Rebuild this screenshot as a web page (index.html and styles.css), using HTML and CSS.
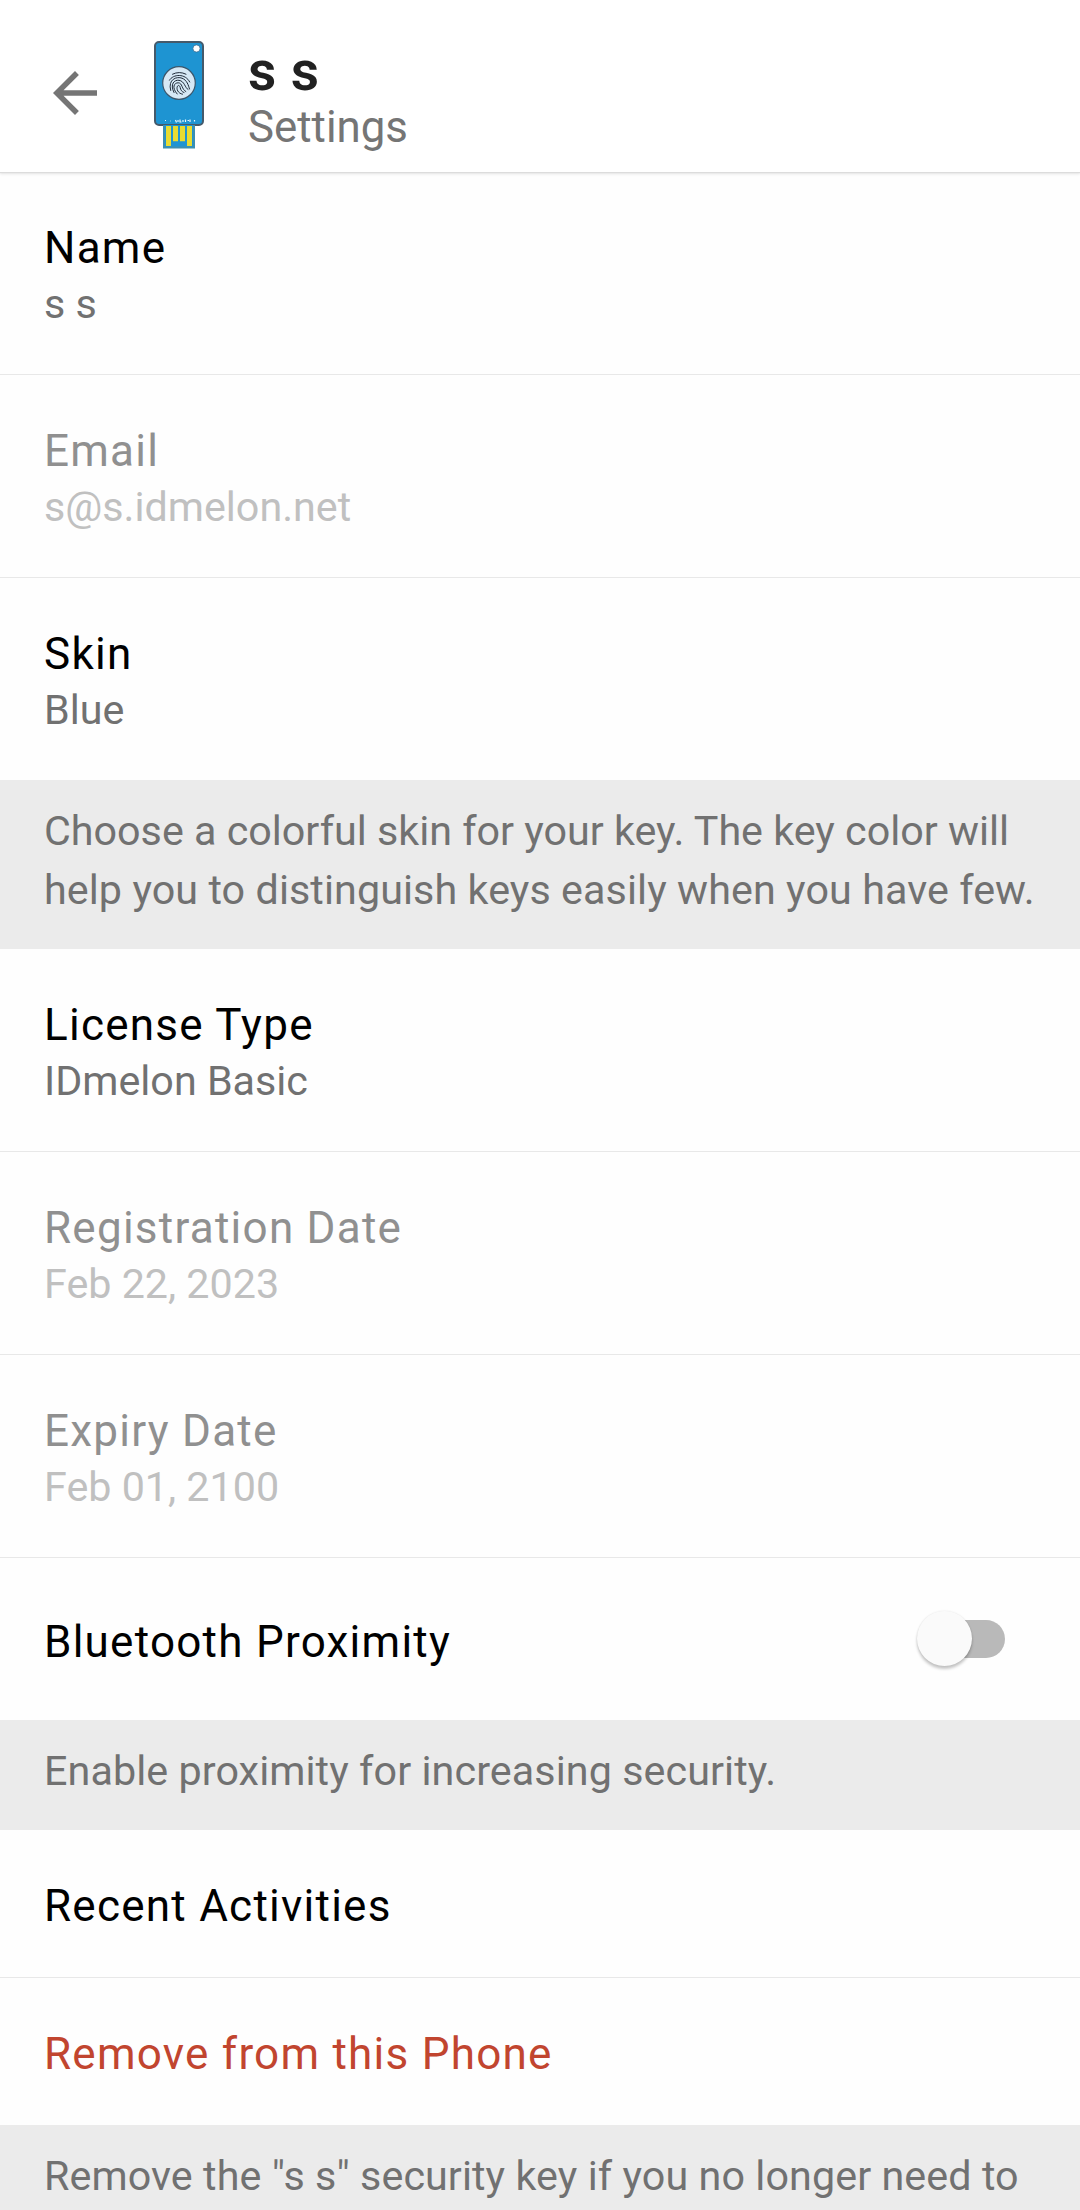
FILE: index.html
```html
<!DOCTYPE html>
<html lang="en">
<head>
<meta charset="utf-8">
<title>Settings</title>
<link rel="stylesheet" href="styles.css">
</head>
<body>
<div class="screen">
  <header class="toolbar">
    <svg class="back" viewBox="0 0 24 24" aria-label="Back"><path d="M20 11H7.83l5.59-5.59L12 4l-8 8 8 8 1.41-1.41L7.83 13H20z"/></svg>
    <svg class="key" viewBox="0 0 50 108" aria-hidden="true">
      <rect class="key-body" x="1" y="1" width="48" height="83" rx="4"/>
      <path class="key-plug" d="M10 84V106.500H40V84"/>
      <path class="key-pins" d="M12 85h5v20h-5zM19 85h5v15.300h-5zM26 85h5v15.300h-5zM33 85h5v20h-5z"/>
      <circle class="key-hole" cx="42.5" cy="7.5" r="3.6"/>
      <circle class="key-sensor" cx="25" cy="42" r="16.3"/>
      <g class="key-print">
        <path d="M18.500 33.200Q25.300 29.800 32 33.200"/>
        <path d="M15.500 39.200C19 32.800 31.500 32.200 35.700 41"/>
        <path d="M16.700 49.500C13.500 38 23 35.200 28 37.200C33 39 34.500 44.500 35.500 48"/>
        <path d="M20 51.500C15.500 43 20.500 38.600 25 39.300C30.500 40 31 47 34 48.500"/>
        <path d="M23.200 53C17.500 46.500 20 41.800 24.200 41.800C28.500 41.800 27.500 48.500 31.800 50.500"/>
        <path d="M28.500 53.200C24 52.500 22 48 23.500 45.200C24.500 43.500 26 45 26.200 46.500C26.500 49 28 51 30 51.500"/>
      </g>
      <path class="key-mark" d="M11 79.500h1M16 80h.6M21.500 79l1 2.500M24 79v2M26 78.500v2.500h1.500M29 79v2M31.500 78.500v2.500M33.500 79.500h1.500M36 78.500v2.500M40.500 79v1.500"/>
    </svg>
    <div class="heading">
      <h1 class="heading-title">s s</h1>
      <p class="heading-sub">Settings</p>
    </div>
  </header>
  <main>
    <section class="item divided"><h2 class="label">Name</h2><p class="value">s s</p></section>
    <section class="item divided disabled"><h2 class="label">Email</h2><p class="value">s@s.idmelon.net</p></section>
    <section class="item"><h2 class="label">Skin</h2><p class="value">Blue</p></section>
    <p class="note">Choose a colorful skin for your key. The key color will <span class="loose">help you to distinguish keys easily when you have few.</span></p>
    <section class="item divided"><h2 class="label">License Type</h2><p class="value">IDmelon Basic</p></section>
    <section class="item divided disabled"><h2 class="label">Registration Date</h2><p class="value">Feb 22, 2023</p></section>
    <section class="item divided disabled"><h2 class="label">Expiry Date</h2><p class="value">Feb 01, 2100</p></section>
    <section class="item item-switch"><h2 class="label">Bluetooth Proximity</h2><span class="switch" role="switch" aria-checked="false"><span class="thumb"></span></span></section>
    <p class="note"><span class="loose">Enable proximity for increasing security.</span></p>
    <section class="item divided"><h2 class="label">Recent Activities</h2></section>
    <section class="item"><h2 class="label danger">Remove from this Phone</h2></section>
    <p class="note"><span class="loose">Remove the "s s" security key if you no longer need to</span></p>
  </main>
</div>
</body>
</html>
```
FILE: styles.css
```css
* { box-sizing: border-box; }
body { margin: 0; background: #fff; font-family: Roboto, "Noto Sans", sans-serif; }
h1, h2, p { margin: 0; font-weight: 400; }

.screen { width: 1080px; height: 2210px; overflow: hidden; background: #fefefe; }

.toolbar {
  display: flex;
  align-items: flex-start;
  height: 172px;
  padding-left: 42px;
  background: #fff;
  box-shadow: 0 1px 1px #dcdcdc, 0 2px 3px rgba(0, 0, 0, .1);
}
.back { width: 66px; height: 66px; margin-top: 60px; fill: #757575; }
.key { width: 50px; height: 108px; margin: 41px 0 0 46px; overflow: visible; }
.key-body { fill: #1e94d2; stroke: #455a6b; stroke-width: 2; }
.key-plug { fill: #1e94d2; stroke: #3d8fb0; stroke-width: 2; }
.key-pins { fill: #e8dc32; }
.key-hole { fill: #fff; stroke: #3a6f93; stroke-width: .8; }
.key-sensor { fill: #d6e8f5; stroke: #3b566b; stroke-width: 1.2; }
.key-print { fill: none; stroke: #1f2a38; stroke-width: 1; stroke-linecap: round; }
.key-mark { fill: none; stroke: #e9f5fc; stroke-width: 1.2; }

.heading { margin: 42px 0 0 44px; }
.heading-title { font-size: 55px; font-weight: 600; line-height: 58px; letter-spacing: .4px; color: #212121; }
.heading-sub { font-size: 43.8px; line-height: 55px; color: #757575; }

.item { padding: 48px 44px 42px; }
.divided { border-bottom: 1px solid #e8e8e8; }
.label { font-size: 44px; line-height: 56px; letter-spacing: 1.25px; color: #000; }
.value { font-size: 41.25px; line-height: 56px; color: #717171; }
.label:last-child { padding-bottom: 1px; }
.disabled .label { color: #909090; }
.disabled .value { color: #c0c0c0; }
.danger { color: #c1452f; }

.note {
  padding: 22px 44px 29px;
  font-size: 41.25px;
  line-height: 59px;
  color: #717171;
  background: #ebebeb;
}
.loose { letter-spacing: .08px; }

.item-switch {
  display: flex;
  justify-content: space-between;
  height: 162px;
  padding: 56px 75px 0 44px;
}
.switch {
  position: relative;
  width: 77px;
  height: 38px;
  margin-top: 6px;
  border-radius: 19px;
  background: #b9b9b9;
}
.thumb {
  position: absolute;
  left: -11px;
  top: -9px;
  width: 55px;
  height: 55px;
  border-radius: 50%;
  background: #fafafa;
  box-shadow: 0 3px 3px rgba(0, 0, 0, .22), 0 0 2px rgba(0, 0, 0, .1);
}
```
